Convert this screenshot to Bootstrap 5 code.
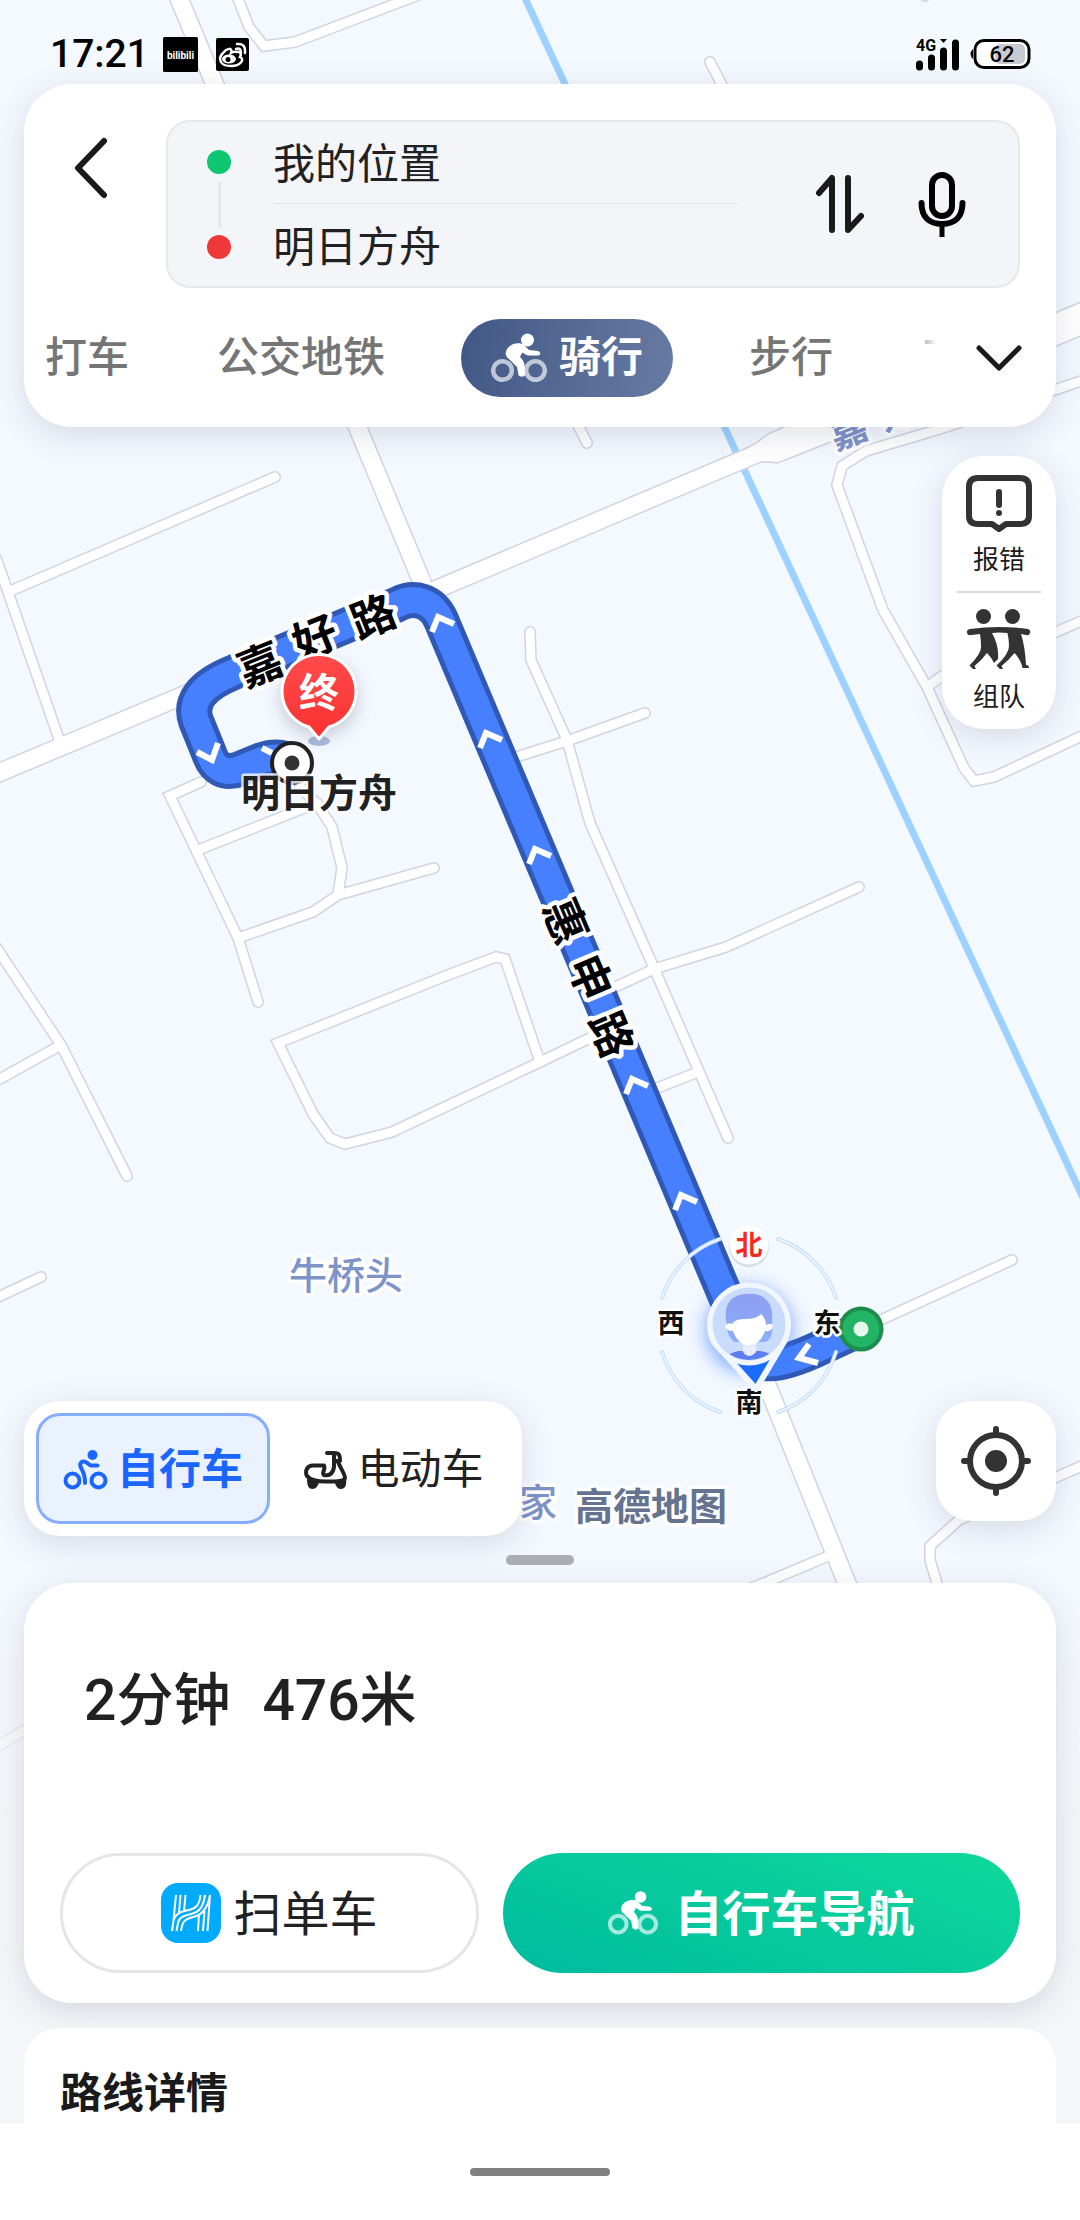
<!DOCTYPE html>
<html lang="zh-CN">
<head>
<meta charset="utf-8">
<meta name="viewport" content="width=device-width, initial-scale=1">
<title>骑行路线</title>
<link href="https://cdn.jsdelivr.net/npm/bootstrap@5.3.0/dist/css/bootstrap.min.css" rel="stylesheet">
<script src="https://cdn.jsdelivr.net/npm/bootstrap@5.3.0/dist/js/bootstrap.bundle.min.js"></script>
<style>
  body { font-family: Roboto, "Noto Sans CJK SC", sans-serif; color: #212121; background: #f4f8ff; font-size: 42px; line-height: 48px; }
  button, input { font-family: inherit; }
  .screen { min-height: 100vh; isolation: isolate; }
  .map-layer { z-index: -1; }
  .map-layer svg { width: 100%; height: 2220px; }
  .bare { background: none; border: 0; padding: 0; color: inherit; line-height: inherit; font-weight: inherit; }
  .panel { background: #fff; box-shadow: 0 8px 32px rgba(50, 55, 80, .15); }

  .statusbar { height: 84px; padding: 24px 48px 0 50px; color: #000; }
  .clock { font-size: 39px; font-weight: 500; line-height: 60px; margin-right: 14px; }
  .app-gap { margin-right: 18px; }

  .search-panel { margin: 0 24px; padding: 36px 36px 30px; border-radius: 48px; height: 343px; }
  .back-btn { width: 106px; padding: 16px 0 0 14px; text-align: left; line-height: 0; }
  .route-box { background: #f4f5f9; border: 2px solid #e8e8ea; border-radius: 24px; height: 168px; padding: 0 52px 0 39px; }
  .stop-dot { width: 24px; height: 24px; border-radius: 50%; }
  .stop-line { width: 3px; height: 45px; background: #e6e7eb; }
  .stop-fields { margin-left: 42px; }
  .stop-input { height: 83px; font-size: 42px; line-height: 64px; color: #212121; padding: 0 0 4px; }
  .stop-input:first-of-type { border-bottom: 1px solid #e4e5e9 !important; }
  .route-tools { margin-left: 77px; gap: 53px; }

  .mode-tabs { margin: 31px -36px 0; padding: 0 33px 0 21px; height: 78px; font-weight: 500; color: #757575; }
  .tab-strip { gap: 76px; }
  .tab-first { margin-right: 12px; }
  .mode-on { width: 212px; height: 78px; border-radius: 39px; color: #fff; font-weight: 700; background: linear-gradient(100deg, #415785, #687ba3); gap: 12px; }
  .tab-peek { width: 11px; height: 4px; margin: 21px 0 0 16px; background: linear-gradient(90deg, #bbb, #fff); }

  .side-tools { width: 114px; border-radius: 42px; padding: 16px 15px 14px; margin: 29px 24px 0 0; font-size: 26px; line-height: 36px; color: #1c1c1c; }
  .side-tools hr { margin: 13px 0 14px; border-top: 2px solid #dcdcdc; opacity: 1; }
  .tool-btn { gap: 6px; }

  .ride-switch { height: 135px; width: 498px; border-radius: 36px; padding: 12px; }
  .ride-opt { width: 234px; height: 111px; border: 3px solid transparent; border-radius: 24px; gap: 9px; padding-top: 2px; cursor: pointer; }
  .ride-opt.wide { padding-left: 8px; }
  .btn-check:checked + .ride-opt { border-color: #86adff; background: #eaf2ff; color: #1a66ff; font-weight: 700; }
  .locate-btn { width: 120px; height: 120px; border-radius: 36px; }
  .map-tools { padding: 0 24px; }
  .grip { width: 68px; height: 10px; border-radius: 5px; background: #acaeb4; margin: 19px auto 18px; }

  .sheet { background: linear-gradient(rgba(245,246,249,0), #f5f6f9 230px); padding: 0 24px; }
  .summary { height: 420px; border-radius: 48px; padding: 82px 36px 30px; }
  .summary-line { font-size: 57px; font-weight: 500; line-height: 72px; padding-left: 24px; gap: 32px; }
  .cta { height: 120px; border-radius: 60px; font-size: 48px; line-height: 60px; }
  .cta span { padding-top: 3px; }
  .cta-scan { border: 3px solid #e6e6e6; width: 419px; gap: 12px; color: #212121; }
  .cta-go { background: linear-gradient(20deg, #00bb9f, #0fd99b); color: #fff; font-weight: 700; gap: 16px; }
  .details { margin-top: 25px; height: 95px; background: #fff; border-radius: 36px 36px 0 0; padding: 42px 36px 0; }
  .details h2 { font-size: 42px; font-weight: 700; line-height: 48px; margin: 0; color: #1a1a1a; }
  .homebar { background: #fff; height: 97px; padding-top: 45px; }
  .homebar div { width: 140px; height: 8px; border-radius: 4px; background: #808080; }

  .roads { fill: none; stroke-linecap: round; stroke-linejoin: miter; }
  .casing { stroke: #d0d4e3; }
  .surface { stroke: #fff; }
  .map-text { font-family: "Noto Sans CJK SC", sans-serif; text-anchor: middle; paint-order: stroke; stroke: #fff; stroke-linejoin: round; }
  .road-name { font-size: 44px; font-weight: 700; fill: #000; stroke-width: 9px; }
  .area-name { font-size: 38px; font-weight: 500; fill: #7e93c8; stroke-width: 7px; }
  .compass-name { font-size: 27px; font-weight: 700; fill: #111; stroke-width: 5px; }
</style>
</head>
<body>
<svg class="d-none" aria-hidden="true">
  <symbol id="rider" viewBox="0 0 56 50">
    <g fill="none" stroke="currentColor" stroke-opacity=".65" stroke-width="4.5"><circle cx="11.5" cy="37.500" r="9.300"/><circle cx="44.500" cy="37.500" r="9.300"/></g>
    <circle cx="36.500" cy="7" r="6.500" fill="currentColor"/>
    <path fill="currentColor" d="M16 16C20 10 29 9 33 12L38 17L47 18C50 19 50 22 47 22.500L37 22.500C34 22 32 19 31 20L29 24C34 29 34 32 34 42C33 44 29 44 27.500 42L26 34L18 26C14 23 14 20 16 16Z"/>
  </symbol>
  <symbol id="rider-line" viewBox="0 0 44 40">
    <g fill="none" stroke="currentColor" stroke-width="4" stroke-linecap="round" stroke-linejoin="round"><circle cx="9" cy="30.500" r="7"/><circle cx="35" cy="30.500" r="7"/><path d="M34 15.500H27C23 12 19 9.500 17 13.500C15 18 22 20 21.500 33"/></g>
    <circle cx="29" cy="5" r="5" fill="currentColor"/>
  </symbol>
  <symbol id="scooter" viewBox="0 0 44 38">
    <g fill="none" stroke="currentColor" stroke-width="4" stroke-linecap="round" stroke-linejoin="round"><path d="M23 2H30V16C29 23 25 25 20 24C17 22 22 19 20 14.500H10C2 14 1 21 3 25C6 29 13 30.500 22 30.500C31 30.500 40 31 41 27C41 23 37 18 34 11M30 2C36 2 36 5 36 10H31"/></g>
    <path fill="currentColor" d="M3 28L15 31C14 35 12 38 8.500 38C5 38 3 35 3 28ZM31 32L42 28C43 34 41 38 37 38C34 38 32 36 31 32Z"/>
  </symbol>
</svg>

<main class="screen position-relative d-flex flex-column overflow-hidden">
  <div class="map-layer position-absolute top-0 start-0 w-100">
    <svg viewBox="0 0 1080 2220" preserveAspectRatio="xMidYMin slice" role="img" aria-label="地图路线">
      <defs>
        <g id="minor">
          <path d="M237 -4L249 27L264 46L295 42L416 -4M710 62L735 110M925 -10V-4M540 350L587 443"/>
          <path d="M275 477L8 592M-4 558L8 592L60 742M201 782L170 796L238 938L258 1002M198 850L317 803M300 787L318 805L332 827L342 868L338 895L313 912L238 938M338 895L434 868"/>
          <path d="M-4 947L61 1045L127 1176M61 1045L-4 1081M41 1277L-4 1298M278 1043L448 975L496 957L505 959L540 1062L392 1132L345 1144L330 1138L313 1114Z"/>
          <path d="M540 1062L592 1037M600 994L654 969L726 947L859 887M530 632L531 660L567 740L590 823L654 968L728 1138M516 757L567 741L645 713M698 1072L657 1088"/>
          <path d="M1084 380L943 428L866 451L842 466L837 485L883 610L927 687L964 768L974 781L994 777L1084 735M927 687L942 676L1056 632L1084 620M861 1329L1012 1260M826 1557L740 1593M1084 1465L959 1520L930 1546V1560L939 1590M-4 1747L30 1727M1050 1807L1084 1863"/>
        </g>
        <g id="major"><path d="M178 -4L422 582M745 1330L848 1586L860 1616M-4 774L430 592L768 449"/></g>
        <path id="avenue" d="M748 448L756 444L768 435L790 425L1090 299V331L831 441L778 462L760 461L748 460Z"/>
        <path id="route" d="M861 1329L822 1347Q782 1366 766 1363Q752 1360 742 1335L441 620C432 600 414 596 398 604L232 673Q186 692 196 721L209 753Q217 777 240 769L262 760Q280 754 294 763"/>
        <path id="arrow" fill="none" stroke="#fff" stroke-width="6" d="M-5 16L1 1L17 8"/>
        <filter id="soft" x="-50%" y="-50%" width="200%" height="200%"><feGaussianBlur stdDeviation="9"/></filter>
        <linearGradient id="pinRed" x2="0" y2="1"><stop stop-color="#ff4c4c"/><stop offset="1" stop-color="#fb3030"/></linearGradient>
        <linearGradient id="hair" x2="0" y2="1"><stop stop-color="#8f9df2"/><stop offset="1" stop-color="#8ab0fb"/></linearGradient>
        <clipPath id="face"><circle cx="749" cy="1324" r="36"/></clipPath>
      </defs>
      <rect width="1080" height="2220" fill="#f4f8ff"/>
      <g class="roads">
        <path d="M524 -4L1084 1200" stroke="#9dd1ff" stroke-width="7"/>
        <g class="casing"><use href="#minor" stroke-width="12"/><use href="#major" stroke-width="20"/><use href="#avenue" stroke-width="3"/></g>
        <g class="surface"><use href="#minor" stroke-width="9"/><use href="#major" stroke-width="17"/><use href="#avenue" fill="#fff" stroke="none"/></g>
        <use href="#route" stroke="#3059b5" stroke-width="36"/>
        <use href="#route" stroke="#4680ff" stroke-width="26"/>
      </g>
      <use href="#arrow" x="437" y="616"/><use href="#arrow" x="485" y="732"/><use href="#arrow" x="534" y="848"/><use href="#arrow" x="631" y="1078"/><use href="#arrow" x="680" y="1194"/>
      <path d="M197 752L212 760L218 743M262 748L272 753M809 1344L799 1358L818 1363" fill="none" stroke="#fff" stroke-width="6"/>

      <g class="map-text road-name">
        <text transform="translate(260 664) rotate(-22)" dy=".38em">嘉</text><text transform="translate(315 637) rotate(-22)" dy=".38em">好</text><text transform="translate(373 616) rotate(-22)" dy=".38em">路</text>
        <text transform="translate(566 921) rotate(67)" dy=".38em">惠</text><text transform="translate(591 977) rotate(67)" dy=".38em">申</text><text transform="translate(612 1034) rotate(67)" dy=".38em">路</text>
      </g>
      <g class="map-text area-name">
        <text transform="translate(848 430) rotate(-22)" dy=".38em" font-weight="700">嘉</text><text transform="translate(897 411) rotate(-22)" dy=".38em" font-weight="700">好</text>
        <text x="346" y="1275" dy=".38em">牛桥头</text>
        <text x="538" y="1502" dy=".38em">家</text>
        <text x="651" y="1506" dy=".38em" font-weight="700" style="fill:#65738f">高德地图</text>
      </g>

      <ellipse cx="319" cy="741" rx="11" ry="5" fill="#a9bbdd"/>
      <circle cx="319" cy="698" r="38" fill="#556" opacity=".3" filter="url(#soft)"/>
      <path d="M319 739L309 727A37 37 0 1 1 329 727Z" fill="url(#pinRed)" stroke="#fff" stroke-width="3" stroke-linejoin="round"/>
      <text class="map-text" x="319" y="692" dy=".38em" font-size="40" font-weight="700" style="fill:#fff;stroke:none">终</text>
      <circle cx="292" cy="763" r="20" fill="#fff" stroke="#222" stroke-width="4"/><circle cx="292" cy="763" r="7.500" fill="#333"/>
      <text class="map-text" x="319" y="792" dy=".38em" font-size="39" font-weight="700" fill="#212121" stroke-width="5" stroke-opacity=".8">明日方舟</text>

      <g fill="none" stroke-linecap="round"><path d="M662 1298A91 91 0 0 1 720 1239M778 1239A91 91 0 0 1 836 1298M662 1352A91 91 0 0 0 720 1412M778 1412A91 91 0 0 0 836 1352" stroke="#c6e0ff" stroke-width="4"/><path d="M662 1298A91 91 0 0 1 720 1239M778 1239A91 91 0 0 1 836 1298M662 1352A91 91 0 0 0 720 1412M778 1412A91 91 0 0 0 836 1352" stroke="#f2f8ff" stroke-width="1.500"/></g>
      <circle cx="861" cy="1329" r="20.500" fill="#22b565" stroke="#1d8c4c" stroke-width="4"/><circle cx="861" cy="1329" r="7.500" fill="#e6f7ee"/>
      <g class="map-text compass-name"><text x="671" y="1323" dy=".38em">西</text><text x="827" y="1323" dy=".38em">东</text><text x="749" y="1402" dy=".38em">南</text></g>
      <circle cx="749" cy="1330" r="44" fill="#2f77ff" opacity=".55" filter="url(#soft)"/>
      <circle cx="749" cy="1247" r="20" fill="#8aa" opacity=".3"/><circle cx="749" cy="1245" r="19.500" fill="#fff"/>
      <text class="map-text" x="749" y="1245" dy=".38em" font-size="27" font-weight="700" style="fill:#f5291f;stroke:none">北</text>
      <path d="M756 1389L714 1342A39 39 0 1 1 785 1340Z" fill="#1a6dff" stroke="#f2f7ff" stroke-width="6" stroke-linejoin="round"/>
      <circle cx="749" cy="1324" r="39" fill="#c9dcfb" stroke="#f2f7ff" stroke-width="5"/>
      <g clip-path="url(#face)">
        <path d="M724 1362Q728 1352 739 1351H759Q772 1352 776 1362Z" fill="#5d7df3"/>
        <path d="M727 1325C722 1305 731 1294 747 1294C764 1292 774 1304 772 1320C774 1334 770 1342 764 1342H734Q726 1334 727 1325Z" fill="url(#hair)"/>
        <path d="M743 1340H756V1352Q749 1360 743 1352Z" fill="#e9edf8"/>
        <path d="M732 1324Q735 1319 745 1319Q757 1319 761 1314Q766 1319 766 1325Q772 1322 773 1326Q772 1332 765 1331Q760 1345 749 1345Q738 1345 733 1331Q726 1331 725 1326Q728 1322 732 1324Z" fill="#fff"/>
      </g>
    </svg>
  </div>

  <header class="statusbar d-flex align-items-center">
    <time class="clock">17:21</time>
    <svg class="app-gap" width="35" height="35" viewBox="0 0 35 35" aria-hidden="true"><rect width="35" height="35" rx="1.500"/><text x="17.500" y="22" text-anchor="middle" font-family="Roboto" font-size="10" font-weight="700" fill="#fff">bilibili</text></svg>
    <svg width="33" height="33" viewBox="0 0 33 33" aria-hidden="true"><rect width="33" height="33" rx="2"/><g fill="none" stroke="#fff" stroke-width="2.500" stroke-linecap="round"><path d="M20 14C24 13 26 16 24 19C29 21 25 28 15 28C3 28 2 20 7 15C11 10 17 9 15 15C17 14 18 13 20 14Z"/><path d="M20 11Q25 9 25 15M21 6Q30 5 29 15"/></g><ellipse cx="13" cy="21" rx="7" ry="4.500" fill="#fff"/><circle cx="12" cy="21.500" r="2.500"/></svg>
    <svg class="ms-auto" width="45" height="36" viewBox="0 0 45 36" role="img" aria-label="4G"><text x="1" y="15" font-family="Roboto" font-size="16" font-weight="700">4G</text><path d="M4.500 28V31M16.500 22V31M28.500 15V31M40.500 7V31" stroke="#000" stroke-width="7" stroke-linecap="round"/><path d="M25 3H32L28.500 7Z"/></svg>
    <svg class="ms-2" width="64" height="32" viewBox="0 0 64 32" role="img" aria-label="62%"><rect x="7" y="2.500" width="54" height="27" rx="9" fill="#fff" stroke="#000" stroke-width="3"/><rect x="27" y="6" width="30" height="20" rx="5" fill="#c9cad0"/><path d="M5 11Q0 16 5 21Z"/><text x="34" y="24" text-anchor="middle" font-family="Roboto" font-size="22" font-weight="500">62</text></svg>
  </header>

  <section class="search-panel panel">
    <div class="d-flex">
      <button type="button" class="bare back-btn flex-shrink-0 align-self-start" aria-label="返回"><svg width="34" height="64" viewBox="0 0 34 64"><path d="M30 5L4 32L30 59" fill="none" stroke="#1a1a1a" stroke-width="6" stroke-linecap="round" stroke-linejoin="round"/></svg></button>
      <form class="route-box d-flex align-items-center flex-grow-1">
        <div class="d-flex flex-column align-items-center gap-2" aria-hidden="true">
          <div class="stop-dot" style="background:#0fc671"></div><div class="stop-line"></div><div class="stop-dot" style="background:#f03838"></div>
        </div>
        <div class="stop-fields flex-grow-1">
          <input id="origin" aria-label="起点" class="stop-input border-0 bg-transparent w-100 d-block" value="我的位置">
          <input id="target" aria-label="终点" class="stop-input border-0 bg-transparent w-100 d-block" value="明日方舟">
        </div>
        <div class="route-tools d-flex align-items-center">
          <button type="button" class="bare d-flex" aria-label="交换起终点"><svg width="50" height="60" viewBox="0 0 50 60"><path d="M4 19L17 4V56M33 4V56L46 42" fill="none" stroke="#1a1a1a" stroke-width="6" stroke-linecap="round" stroke-linejoin="round"/></svg></button>
          <button type="button" class="bare d-flex" aria-label="语音输入"><svg width="48" height="66" viewBox="0 0 48 66"><g fill="none" stroke="#000" stroke-width="6"><rect x="14" y="4" width="20" height="41" rx="10"/><path d="M3.500 32C3.500 46 11 53 24 53S44.500 46 44.500 32" stroke-linecap="round"/><path d="M24 53V66" stroke-width="5"/></g></svg></button>
        </div>
      </form>
    </div>
    <nav class="mode-tabs d-flex align-items-center justify-content-between" aria-label="出行方式">
      <div class="tab-strip d-flex align-items-center">
        <button type="button" class="bare tab-first text-nowrap">打车</button>
        <button type="button" class="bare text-nowrap">公交地铁</button>
        <button type="button" class="bare mode-on flex-shrink-0 d-flex align-items-center justify-content-center"><svg width="56" height="50"><use href="#rider"/></svg>骑行</button>
        <button type="button" class="bare text-nowrap">步行</button>
        <span class="tab-peek align-self-start flex-shrink-0" aria-hidden="true"></span>
      </div>
      <button type="button" class="bare d-flex" aria-label="更多"><svg width="48" height="28" viewBox="0 0 48 28"><path d="M4 4L24 24L44 4" fill="none" stroke="#1a1a1a" stroke-width="5" stroke-linecap="round" stroke-linejoin="round"/></svg></button>
    </nav>
  </section>

  <aside class="side-tools panel align-self-end">
    <button type="button" class="bare tool-btn w-100 d-flex flex-column align-items-center"><svg width="66" height="64" viewBox="0 0 66 64"><g fill="none" stroke="#333" stroke-width="6" stroke-linejoin="round"><path d="M12 6H54Q63 6 63 15V44Q63 52 54 52H40L33 57L26 52H12Q3 52 3 44V15Q3 6 12 6Z"/><path d="M33 20V33M33 41V41.100" stroke-linecap="round"/></g></svg>报错</button>
    <hr>
    <button type="button" class="bare tool-btn w-100 d-flex flex-column align-items-center"><svg width="64" height="66" viewBox="0 0 64 64"><g fill="#333"><circle cx="16.500" cy="8.500" r="7.500"/><circle cx="45.500" cy="8.500" r="7.500"/><path d="M3 21Q32 17 61 21Q64 22 63 25Q62 28 59 27L54 26Q58 38 59 57Q62 57 62 60H55.500Q54 52 47.500 45Q41 53 34.500 58L36 61L33 61L29.500 57.500Q42 46 42 38Q42 32 40.500 25Q32 24 25 25Q32 37 31 51L27 55Q25 50 20 45Q14 53 7.500 58L9 61L6 61L2.500 57.500Q15 45 14 38Q14 32 13 26L4 27Q1 28 0 25Q-1 22 3 21Z"/></g></svg>组队</button>
  </aside>

  <div class="map-tools d-flex justify-content-between align-items-start mt-auto">
    <div class="ride-switch panel d-flex" role="group" aria-label="车型">
      <input type="radio" class="btn-check" name="ride" id="bike" checked>
      <label for="bike" class="ride-opt d-flex align-items-center justify-content-center"><svg width="45" height="40"><use href="#rider-line"/></svg>自行车</label>
      <input type="radio" class="btn-check" name="ride" id="ebike">
      <label for="ebike" class="ride-opt wide d-flex align-items-center justify-content-center flex-grow-1"><svg width="44" height="38"><use href="#scooter"/></svg>电动车</label>
    </div>
    <button type="button" class="bare panel locate-btn d-flex align-items-center justify-content-center" aria-label="定位"><svg width="70" height="70" viewBox="0 0 70 70"><g fill="none" stroke="#333" stroke-width="6" stroke-linecap="round"><circle cx="35" cy="35" r="26"/><path d="M35 3V9M35 61V67M3 35H9M61 35H67"/></g><circle cx="35" cy="35" r="11" fill="#333"/></svg></button>
  </div>
  <div class="grip"></div>

  <section class="sheet">
    <div class="summary panel d-flex flex-column justify-content-between">
      <div class="summary-line d-flex"><span>2分钟</span><span>476米</span></div>
      <div class="d-flex align-items-end gap-4">
        <button type="button" class="cta cta-scan bg-white d-flex align-items-center justify-content-center"><svg width="60" height="60" viewBox="0 0 60 60"><rect width="60" height="60" rx="17" fill="#0af"/><g fill="none" stroke="#fff" stroke-width="2"><path d="M11 48L12.500 38C14 30 20 29 28 27C36 25 38.500 21 39.500 12M15.500 48L17 40C18 34 23 33 30 31C39 29 42.500 23 44 12M20 48L21 43C22 37 26 36 32 34C42 32 47 24 49 12M15 12L12.500 37M19.500 12L18 30M24.500 12L23 28M37 48L38 31M42 48L43.500 28M46.500 48L49 12"/></g></svg><span>扫单车</span></button>
        <button type="button" class="bare cta cta-go flex-grow-1 d-flex align-items-center justify-content-center"><svg width="50" height="46"><use href="#rider"/></svg><span>自行车导航</span></button>
      </div>
    </div>
    <div class="details"><h2>路线详情</h2></div>
  </section>
  <footer class="homebar"><div class="mx-auto"></div></footer>
</main>
</body>
</html>
